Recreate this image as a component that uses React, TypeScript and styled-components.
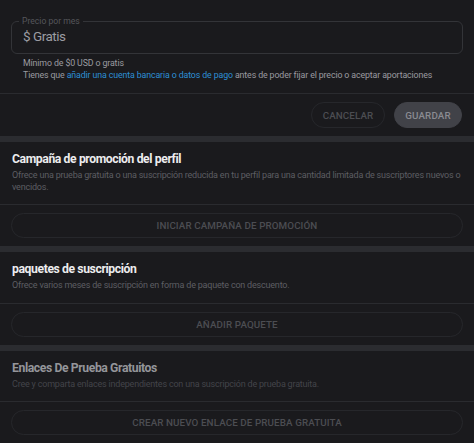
import React from "react";
import styled, { createGlobalStyle } from "styled-components";

const Global = createGlobalStyle`
  html, body { margin: 0; padding: 0; background: #1a1a1d; }
  body { font-family: Roboto, "Noto Sans", "Liberation Sans", sans-serif; -webkit-font-smoothing: antialiased; }
  * { box-sizing: border-box; }
`;

const Page = styled.div`
  width: 474px;
  min-height: 443px;
  background: #1a1a1d;
  display: flex;
  flex-direction: column;
`;

const Section = styled.section`
  display: flex;
  flex-direction: column;
  & + & { border-top: 6px solid #2b2c30; }
`;

const PriceBlock = styled.div`
  padding: 16px 11px 12px;
  border-bottom: 1px solid #2a2b2f;
`;

const Field = styled.fieldset`
  margin: 0;
  padding: 0 11px;
  border: 1px solid #333438;
  border-radius: 6px;
  height: 38px;
`;

const Legend = styled.legend`
  font-size: 8.6px;
  line-height: 10px;
  color: #55565b;
  padding: 0 3px;
  margin-left: -4px;
`;

const Value = styled.div`
  font-size: 13.5px;
  line-height: 18px;
  letter-spacing: -0.5px;
  color: #9c9da2;
  margin-top: 1px;
`;

const Help = styled.div`
  padding: 3px 12px 0;
  font-size: 8.8px;
  line-height: 12px;
  letter-spacing: -0.12px;
  color: #9a9ba0;
  white-space: nowrap;
`;

const Link = styled.a`
  color: #2d8fd5;
  text-decoration: none;
`;

const Actions = styled.div`
  display: flex;
  justify-content: flex-end;
  gap: 9px;
  padding: 8px 12px 8px;
`;

const PillButton = styled.button<{ $filled?: boolean; $width?: number }>`
  height: ${(p) => (p.$width ? "26px" : "25px")};
  width: ${(p) => (p.$width ? `${p.$width}px` : "100%")};
  border-radius: 13px;
  border: 1px solid ${(p) => (p.$filled ? "#414248" : "#26272b")};
  background: ${(p) => (p.$filled ? "#414248" : "transparent")};
  color: ${(p) => (p.$filled ? "#8a8b91" : "#4c4d52")};
  font-family: Roboto, "Noto Sans", "Liberation Sans", sans-serif;
  font-size: 9.8px;
  font-weight: 500;
  letter-spacing: 0.1px;
  text-transform: uppercase;
  padding: 0;
  cursor: default;
`;

const Header = styled.div`
  padding: 8px 12px 11px;
  border-bottom: 1px solid #2a2b2f;
`;

const Title = styled.h2<{ $muted?: boolean }>`
  margin: 0 0 2px;
  font-size: 12.2px;
  line-height: 18px;
  letter-spacing: -0.4px;
  font-weight: 700;
  color: ${(p) => (p.$muted ? "#94959a" : "#ececee")};
`;

const Desc = styled.p<{ $muted?: boolean }>`
  margin: 0;
  font-size: 9px;
  line-height: 11.5px;
  letter-spacing: -0.2px;
  color: ${(p) => (p.$muted ? "#43444a" : "#5d5e63")};
`;

const ButtonArea = styled.div`
  padding: 8px 11px 8px;
`;

type Promo = { title: string; desc: string; action: string; muted?: boolean };

const promos: Promo[] = [
  {
    title: "Campaña de promoción del perfil",
    desc: "Ofrece una prueba gratuita o una suscripción reducida en tu perfil para una cantidad limitada de suscriptores nuevos o vencidos.",
    action: "Iniciar campaña de promoción",
  },
  {
    title: "paquetes de suscripción",
    desc: "Ofrece varios meses de suscripción en forma de paquete con descuento.",
    action: "Añadir paquete",
  },
  {
    title: "Enlaces De Prueba Gratuitos",
    desc: "Cree y comparta enlaces independientes con una suscripción de prueba gratuita.",
    action: "Crear nuevo enlace de prueba gratuita",
    muted: true,
  },
];

export default function App() {
  return (
    <Page>
      <Global />
      <Section>
        <PriceBlock>
          <Field>
            <Legend>Precio por mes</Legend>
            <Value>$ Gratis</Value>
          </Field>
          <Help>
            <div>Mínimo de $0 USD o gratis</div>
            <div>
              Tienes que <Link href="#">añadir una cuenta bancaria o datos de pago</Link> antes de poder fijar el precio o aceptar aportaciones
            </div>
          </Help>
        </PriceBlock>
        <Actions>
          <PillButton $width={74}>Cancelar</PillButton>
          <PillButton $filled $width={68}>Guardar</PillButton>
        </Actions>
      </Section>
      {promos.map((p) => (
        <Section key={p.title}>
          <Header>
            <Title $muted={p.muted}>{p.title}</Title>
            <Desc $muted={p.muted}>{p.desc}</Desc>
          </Header>
          <ButtonArea>
            <PillButton>{p.action}</PillButton>
          </ButtonArea>
        </Section>
      ))}
    </Page>
  );
}
